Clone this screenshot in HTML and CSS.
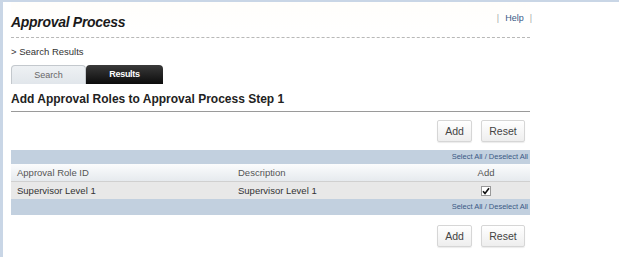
FILE: index.html
```html
<!DOCTYPE html>
<html>
<head>
<meta charset="utf-8">
<link rel="stylesheet" href="styles.css">
</head>
<body>
<div class="frame">
  <div class="page">
    <div class="titlebar">
      <h1 class="title">Approval Process</h1>
      <div class="help"><span class="pipe">|</span><a class="help-link">Help</a><span class="pipe">|</span></div>
    </div>
    <div class="crumb">&gt; Search Results</div>
    <div class="tabs">
      <div class="tab tab-search">Search</div>
      <div class="tab tab-results">Results</div>
    </div>
    <h2 class="section">Add Approval Roles to Approval Process Step 1</h2>
    <div class="actions"><button class="btn">Add</button><button class="btn">Reset</button></div>
    <div class="grid">
      <div class="selbar"><a>Select All</a> / <a>Deselect All</a></div>
      <div class="row head"><span class="c1">Approval Role ID</span><span class="c2">Description</span><span class="c3">Add</span></div>
      <div class="row data"><span class="c1">Supervisor Level 1</span><span class="c2">Supervisor Level 1</span><span class="c3"><span class="chk"><svg viewBox="0 0 8 8" width="8" height="8"><path d="M1 4.2 L3 6.4 L7 1.2" fill="none" stroke="#111" stroke-width="1.6"/></svg></span></span></div>
      <div class="selbar bottom"><a>Select All</a> / <a>Deselect All</a></div>
    </div>
    <div class="actions second"><button class="btn">Add</button><button class="btn">Reset</button></div>
  </div>
</div>
</body>
</html>
```
FILE: styles.css
```css
html, body { margin: 0; padding: 0; background: #fff; }
body { font-family: "Liberation Sans", Arial, sans-serif; color: #333; width: 619px; height: 259px; overflow: hidden; }
.frame { border-top: 2px solid #c9d6e6; border-left: 3px solid #c9d6e6; height: 257px; box-sizing: border-box; background: #fff; }
.page { width: 519px; padding-left: 8px; }
.titlebar { display: flex; justify-content: space-between; align-items: flex-start; border-bottom: 1px dashed #b8b8b8; height: 35px; background: linear-gradient(#fffefb, #fff); }
.title { margin: 0; padding-top: 12px; font-size: 14px; font-style: italic; font-weight: bold; color: #1a1a1a; letter-spacing: -0.3px; }
.help { font-size: 9px; padding-top: 11px; color: #999; display: flex; gap: 6px; margin-right: -2px; }
.help-link { color: #3a5a86; }
.pipe { color: #aaa; }
.crumb { font-size: 9.5px; color: #333; margin-top: 8px; height: 12px; }
.tabs { display: flex; margin-top: 7px; height: 19px; }
.tab { width: 75px; box-sizing: border-box; font-size: 9px; text-align: center; line-height: 19px; border-radius: 4px 4px 0 0; }
.tab-search { background: linear-gradient(#eef1f4, #e1e6eb); border: 1px solid #c3c8cd; border-bottom: none; color: #666; line-height: 18px; }
.tab-results { width: 77px; background: linear-gradient(#3a3a3a, #0c0c0c); color: #fff; font-weight: bold; letter-spacing: -0.3px; }
.section { margin: 0; font-size: 12px; font-weight: bold; color: #222; padding-top: 8px; height: 18px; border-bottom: 1px solid #9a9a9a; padding-bottom: 1px; }
.actions { display: flex; justify-content: flex-end; gap: 9px; margin-top: 8px; padding-right: 5px; height: 22px; }
.actions.second { margin-top: 10px; }
.btn { font-family: "Liberation Sans", Arial, sans-serif; font-size: 10.5px; color: #444; background: linear-gradient(#ffffff, #eeeeee); border: 1px solid #d6d6d6; border-radius: 2px; padding: 0; height: 22px; box-shadow: 0 1px 1px rgba(0,0,0,0.08); }
.btn:first-child { width: 35px; }
.btn:last-child { width: 44px; }
.grid { margin-top: 8px; }
.selbar { background: #c2d0df; height: 14px; font-size: 7.5px; color: #3b5a85; text-align: right; line-height: 14px; padding-right: 2px; }
.selbar.bottom { height: 16px; line-height: 16px; }
.row { display: flex; font-size: 9.5px; align-items: center; }
.row.head { height: 17px; background: linear-gradient(#fbfcfd, #e6eaee); color: #555; border-bottom: 1px solid #d0d0d0; }
.row.data { height: 17px; background: #e8e8e8; color: #333; }
.c1 { width: 221px; padding-left: 6px; }
.c2 { width: 227px; }
.c3 { width: 42px; text-align: center; display: flex; justify-content: center; }
.chk { width: 8px; height: 8px; border: 1px solid #999; background: #fff; display: inline-flex; }
```
